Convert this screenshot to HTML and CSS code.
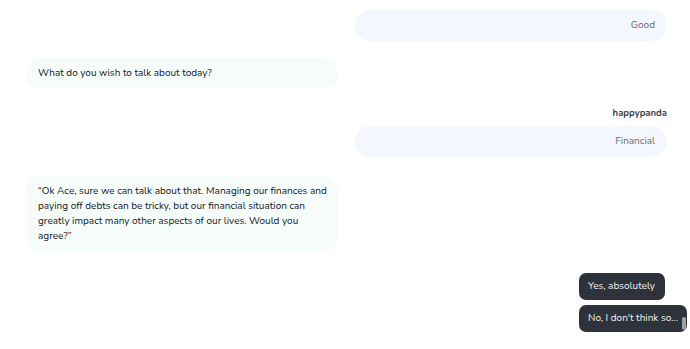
FILE: index.html
```html
<!DOCTYPE html>
<html>
<head>
<meta charset="utf-8">
<link rel="stylesheet" href="styles.css">
</head>
<body>
<div class="chat">
  <div class="row right">
    <div class="bubble user">Good</div>
  </div>
  <div class="row left">
    <div class="bubble bot">What do you wish to talk about today?</div>
  </div>
  <div class="row right name-row">
    <div class="name">happypanda</div>
    <div class="bubble user">Financial</div>
  </div>
  <div class="row left long-row">
    <div class="bubble bot">“Ok Ace, sure we can talk about that. Managing our finances and paying off debts can be tricky, but our financial situation can greatly impact many other aspects of our lives. Would you agree?”</div>
  </div>
  <div class="options">
    <button class="opt">Yes, absolutely</button>
    <button class="opt last">No, I don't think so...<span class="thumb"></span></button>
  </div>
</div>
</body>
</html>
```
FILE: styles.css
```css
* { box-sizing: border-box; }
html, body { margin: 0; padding: 0; background: #fff; }
body {
  font-family: "Nunito", "Lato", "Open Sans", sans-serif;
  font-size: 10px;
  line-height: 15px;
  color: #16181d;
  width: 690px;
  height: 349px;
  overflow: hidden;
}
.chat {
  display: flex;
  flex-direction: column;
  padding: 10px 23px 0 26px;
}
.row { display: flex; flex-direction: column; }
.row.right { align-items: flex-end; }
.row.left { align-items: flex-start; }
.row + .row { margin-top: 17px; }
.name-row { margin-top: 16px !important; }
.long-row { margin-top: 19px !important; }
.name {
  font-weight: 700;
  font-size: 9.5px;
  color: #3b3e47;
  margin-bottom: 6px;
}
.bubble {
  width: 312px;
  border-radius: 15px;
  padding: 8px 8px 8px 12px;
}
.bubble.user {
  background: #f4f7fd;
  color: #696c7a;
  text-align: right;
  padding-right: 12px;
}
.bubble.bot {
  background: #f5fcfa;
  color: #16181d;
}
.options {
  display: flex;
  flex-direction: column;
  align-items: flex-start;
  gap: 5px;
  margin-top: 21px;
  margin-left: 553px;
}
.opt {
  position: relative;
  font-family: inherit;
  font-size: 10px;
  line-height: 15px;
  white-space: nowrap;
  background: #2e323a;
  color: #f3f4f6;
  border: none;
  border-radius: 7px;
  padding: 6px 10px 6px 9px;
}
.opt.last { padding-right: 9px; }
.thumb {
  position: absolute;
  right: 1px;
  top: 12px;
  width: 4px;
  height: 13px;
  border-radius: 2px;
  background: #9ea1a8;
}
```
